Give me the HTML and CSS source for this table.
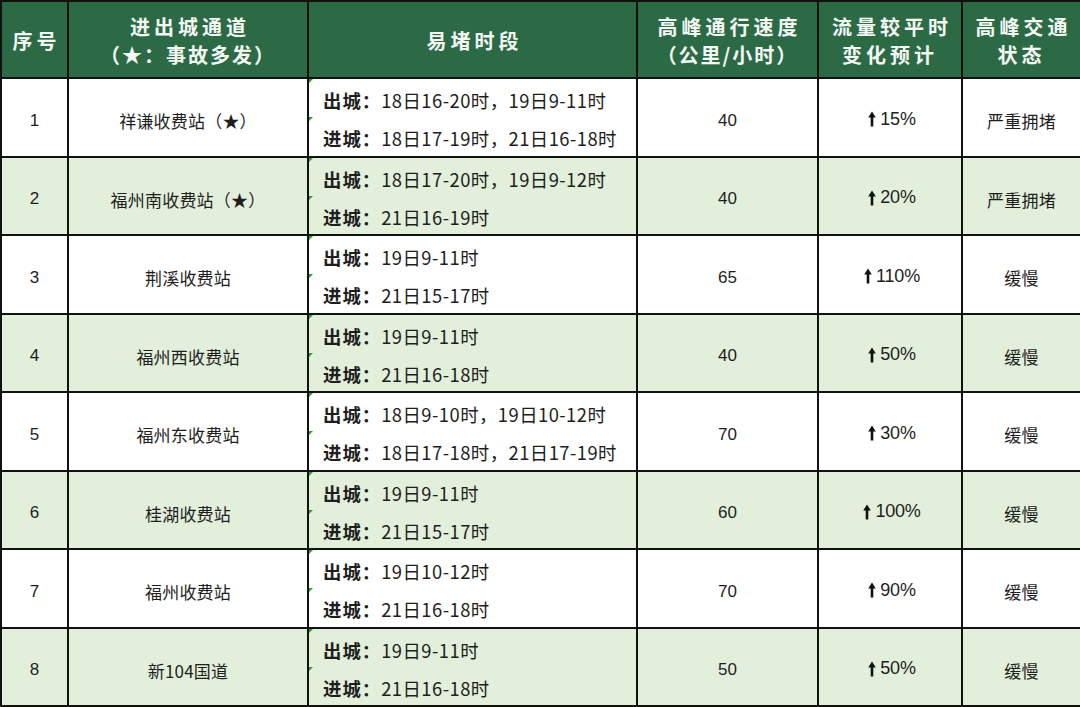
FILE: index.html
```html
<!DOCTYPE html>
<html lang="zh-CN">
<head>
<meta charset="utf-8">
<link rel="stylesheet" href="styles.css">
</head>
<body>
<table class="grid">
  <colgroup>
    <col class="c1"><col class="c2"><col class="c3"><col class="c4"><col class="c5"><col class="c6">
  </colgroup>
  <thead>
    <tr>
      <th>序号</th>
      <th>进出城通道<br><span class="sub">（★：事故多发）</span></th>
      <th>易堵时段</th>
      <th>高峰通行速度<br><span class="sub">（公里/小时）</span></th>
      <th>流量较平时<br>变化预计</th>
      <th>高峰交通<br>状态</th>
    </tr>
  </thead>
  <tbody>
    <tr>
      <td class="num">1</td><td class="name">祥谦收费站（★）</td>
      <td class="time"><div class="ln"><b>出城：</b>18日16-20时，19日9-11时</div><div class="ln"><b>进城：</b>18日17-19时，21日16-18时</div></td>
      <td class="num">40</td><td class="num"><span class="up"><svg viewBox="0 0 8 16" class="arr"><path d="M4 0.5 L7.8 6.5 L5.3 6.5 L5.3 15.5 L2.7 15.5 L2.7 6.5 L0.2 6.5 Z"/></svg><span class="pct">15%</span></span></td><td class="name">严重拥堵</td>
    </tr>
    <tr class="alt">
      <td class="num">2</td><td class="name">福州南收费站（★）</td>
      <td class="time"><div class="ln"><b>出城：</b>18日17-20时，19日9-12时</div><div class="ln"><b>进城：</b>21日16-19时</div></td>
      <td class="num">40</td><td class="num"><span class="up"><svg viewBox="0 0 8 16" class="arr"><path d="M4 0.5 L7.8 6.5 L5.3 6.5 L5.3 15.5 L2.7 15.5 L2.7 6.5 L0.2 6.5 Z"/></svg><span class="pct">20%</span></span></td><td class="name">严重拥堵</td>
    </tr>
    <tr>
      <td class="num">3</td><td class="name">荆溪收费站</td>
      <td class="time"><div class="ln"><b>出城：</b>19日9-11时</div><div class="ln"><b>进城：</b>21日15-17时</div></td>
      <td class="num">65</td><td class="num"><span class="up"><svg viewBox="0 0 8 16" class="arr"><path d="M4 0.5 L7.8 6.5 L5.3 6.5 L5.3 15.5 L2.7 15.5 L2.7 6.5 L0.2 6.5 Z"/></svg><span class="pct">110%</span></span></td><td class="name">缓慢</td>
    </tr>
    <tr class="alt">
      <td class="num">4</td><td class="name">福州西收费站</td>
      <td class="time"><div class="ln"><b>出城：</b>19日9-11时</div><div class="ln"><b>进城：</b>21日16-18时</div></td>
      <td class="num">40</td><td class="num"><span class="up"><svg viewBox="0 0 8 16" class="arr"><path d="M4 0.5 L7.8 6.5 L5.3 6.5 L5.3 15.5 L2.7 15.5 L2.7 6.5 L0.2 6.5 Z"/></svg><span class="pct">50%</span></span></td><td class="name">缓慢</td>
    </tr>
    <tr>
      <td class="num">5</td><td class="name">福州东收费站</td>
      <td class="time"><div class="ln"><b>出城：</b>18日9-10时，19日10-12时</div><div class="ln"><b>进城：</b>18日17-18时，21日17-19时</div></td>
      <td class="num">70</td><td class="num"><span class="up"><svg viewBox="0 0 8 16" class="arr"><path d="M4 0.5 L7.8 6.5 L5.3 6.5 L5.3 15.5 L2.7 15.5 L2.7 6.5 L0.2 6.5 Z"/></svg><span class="pct">30%</span></span></td><td class="name">缓慢</td>
    </tr>
    <tr class="alt">
      <td class="num">6</td><td class="name">桂湖收费站</td>
      <td class="time"><div class="ln"><b>出城：</b>19日9-11时</div><div class="ln"><b>进城：</b>21日15-17时</div></td>
      <td class="num">60</td><td class="num"><span class="up"><svg viewBox="0 0 8 16" class="arr"><path d="M4 0.5 L7.8 6.5 L5.3 6.5 L5.3 15.5 L2.7 15.5 L2.7 6.5 L0.2 6.5 Z"/></svg><span class="pct">100%</span></span></td><td class="name">缓慢</td>
    </tr>
    <tr>
      <td class="num">7</td><td class="name">福州收费站</td>
      <td class="time"><div class="ln"><b>出城：</b>19日10-12时</div><div class="ln"><b>进城：</b>21日16-18时</div></td>
      <td class="num">70</td><td class="num"><span class="up"><svg viewBox="0 0 8 16" class="arr"><path d="M4 0.5 L7.8 6.5 L5.3 6.5 L5.3 15.5 L2.7 15.5 L2.7 6.5 L0.2 6.5 Z"/></svg><span class="pct">90%</span></span></td><td class="name">缓慢</td>
    </tr>
    <tr class="alt">
      <td class="num">8</td><td class="name">新104国道</td>
      <td class="time"><div class="ln"><b>出城：</b>19日9-11时</div><div class="ln"><b>进城：</b>21日16-18时</div></td>
      <td class="num">50</td><td class="num"><span class="up"><svg viewBox="0 0 8 16" class="arr"><path d="M4 0.5 L7.8 6.5 L5.3 6.5 L5.3 15.5 L2.7 15.5 L2.7 6.5 L0.2 6.5 Z"/></svg><span class="pct">50%</span></span></td><td class="name">缓慢</td>
    </tr>
  </tbody>
</table>
</body>
</html>
```
FILE: styles.css
```css
html, body {
  margin: 0;
  padding: 0;
  background: #ffffff;
}
body {
  font-family: "Noto Sans CJK SC", "Noto Sans", sans-serif;
  color: #1e1e1e;
  width: 1080px;
  height: 707px;
  overflow: hidden;
}
.grid {
  width: 1080px;
  border-collapse: collapse;
  table-layout: fixed;
  border: 2px solid #111;
}
.c1 { width: 67px; }
.c2 { width: 240px; }
.c3 { width: 329px; }
.c4 { width: 181px; }
.c5 { width: 144px; }
.c6 { width: 119px; }
.grid th, .grid td {
  border: 2px solid #111;
  padding: 0;
  text-align: center;
  vertical-align: middle;
}
.grid th {
  background: #2c6a46;
  color: #f4f8f4;
  font-size: 20px;
  font-weight: 700;
  letter-spacing: 4px;
  text-indent: 4px;
  line-height: 28px;
  height: 72px;
  padding-top: 3px;
}
.grid th .sub {
  letter-spacing: 2px;
}
.grid td {
  height: 70px;
  font-size: 17px;
  padding-top: 6.5px;
}
.grid tr.alt td {
  background: #e2efda;
}
.num {
  font-family: "Liberation Sans", "Noto Sans CJK SC", sans-serif;
  font-size: 17px;
}
.name {
  font-family: "Noto Sans CJK SC", sans-serif;
  font-size: 19px;
  letter-spacing: 0.2px;
}
.grid td.time {
  text-align: left;
  padding-left: 14px;
  padding-top: 0;
  font-size: 18.4px;
  letter-spacing: 0.45px;
}
.ln {
  position: relative;
  height: 38.25px;
  line-height: 42px;
}
.ln::before {
  content: "";
  position: absolute;
  left: -14px;
  top: 0;
  width: 0;
  height: 0;
  border-top: 4px solid #2f9a2f;
  border-right: 4px solid transparent;
}
.ln b {
  font-weight: 700;
  letter-spacing: 1px;
}
.up {
  display: inline-flex;
  align-items: center;
  gap: 4px;
  margin-left: 4px;
}
.pct {
  font-family: "Liberation Sans Narrow", "Liberation Sans", sans-serif;
  font-stretch: condensed;
  font-size: 18px;
  letter-spacing: -0.2px;
}
.arr {
  width: 8px;
  height: 16px;
  fill: #111;
}
```
